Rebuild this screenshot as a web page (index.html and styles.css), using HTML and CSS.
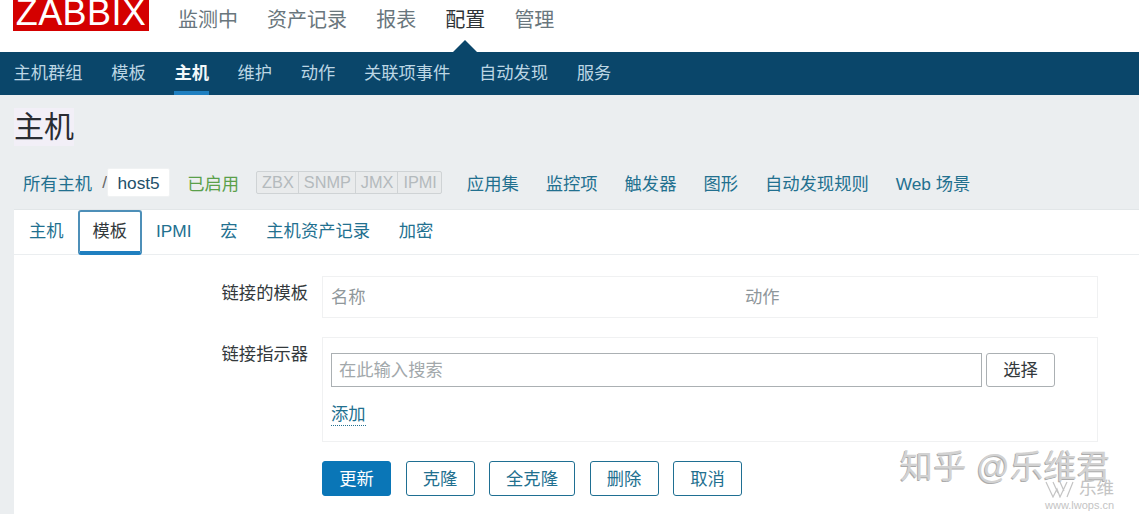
FILE: index.html
```html
<!DOCTYPE html>
<html lang="zh">
<head>
<meta charset="utf-8">
<title>主机</title>
<link rel="stylesheet" href="styles.css">
</head>
<body>
<header class="topbar">
  <div class="logo"><span class="logo-text">ZABBIX</span></div>
  <nav class="topnav">
    <a>监测中</a><a>资产记录</a><a>报表</a><a class="on">配置</a><a>管理</a>
  </nav>
</header>
<nav class="subnav">
  <a>主机群组</a><a>模板</a><a class="on">主机</a><a>维护</a><a>动作</a><a>关联项事件</a><a>自动发现</a><a>服务</a>
</nav>
<main class="page">
  <h1 class="title"><span>主机</span></h1>
  <div class="crumbs">
    <a class="link">所有主机</a><span class="sep">/</span><span class="current">host5</span>
    <span class="status">已启用</span>
    <span class="badges"><i>ZBX</i><i>SNMP</i><i>JMX</i><i>IPMI</i></span>
    <a class="link item">应用集</a><a class="link item">监控项</a><a class="link item">触发器</a><a class="link item">图形</a><a class="link item">自动发现规则</a><a class="link item">Web 场景</a>
  </div>
  <section class="panel">
    <div class="tabs">
      <a>主机</a><a class="on">模板</a><a>IPMI</a><a>宏</a><a>主机资产记录</a><a>加密</a>
    </div>
    <form class="form">
      <label class="lab">链接的模板</label>
      <div class="box head"><span class="c1">名称</span><span>动作</span></div>
      <label class="lab">链接指示器</label>
      <div class="box link-box">
        <div class="search">
          <div class="input">在此输入搜索</div>
          <button type="button" class="btn">选择</button>
        </div>
        <a class="add">添加</a>
      </div>
      <div class="actions">
        <button type="button" class="btn primary">更新</button>
        <button type="button" class="btn">克隆</button>
        <button type="button" class="btn wide">全克隆</button>
        <button type="button" class="btn">删除</button>
        <button type="button" class="btn">取消</button>
      </div>
    </form>
  </section>
</main>
<div class="wm">知乎 @乐维君</div>
<div class="wm2">
  <div class="wm2-row">
    <svg class="wm2-logo" viewBox="0 0 30 17" aria-hidden="true"><path d="M1 1l7 15 4-8 3 8 7-15M8 1l5 11M15 1l4 9M28 1l-6 15"/></svg>
    <b>乐维</b>
  </div>
  <small>www.lwops.cn</small>
</div>
</body>
</html>
```
FILE: styles.css
```css
* { box-sizing: border-box; }
html, body { margin: 0; height: 514px; overflow: hidden; background: #fff; }
body {
  position: relative;
  font-family: "Liberation Sans", "Noto Sans CJK SC", sans-serif;
  font-size: 17.3px;
  color: #3a4a52;
}
a { text-decoration: none; }

.topbar { height: 52px; display: flex; padding-left: 13px; }
.logo {
  width: 136px; height: 31px; background: #d40000; color: #fff;
  overflow: hidden; display: flex; justify-content: center; align-items: flex-end;
}
.logo-text { font-size: 36px; line-height: 36px; letter-spacing: .4px; margin-bottom: 0; }
.topnav { display: flex; gap: 29.1px; margin-left: 29px; padding-top: 7px; font-size: 20px; line-height: 26px; color: #69767d; }
.topnav a { position: relative; height: 45px; }
.topnav a.on { color: #2f3437; }
.topnav a.on::after {
  content: ""; position: absolute; left: 50%; bottom: 0; margin-left: -12px;
  border: 12px solid transparent; border-top: 0; border-bottom: 12px solid #0a466a;
}

.subnav { height: 43px; background: #0a466a; display: flex; gap: 28.6px; padding-left: 13.5px; color: #bcd6e4; line-height: 42px; }
.subnav a { height: 43px; }
.subnav a.on { color: #f2f8fb; font-weight: 700; border-bottom: 4px solid #1f7fc0; }

.page { background: #ebeef0; height: 419px; }
.title { margin: 0; padding: 13px 0 0 14px; height: 58px; font-size: 30px; line-height: 38px; font-weight: 400; color: #2a2d33; }
.title span { background: #f2eff7; display: inline-block; }

.crumbs { height: 56px; display: flex; align-items: center; padding: 2px 0 0 23px; }
.link { color: #22708f; }
.sep { margin: 0 0 0 10px; color: #666; }
.current {
  background: #fff; color: #22506a; height: 29px; line-height: 28px; padding: 0 9px 0 9.5px;
  border: 1px solid #f0f2f3; border-radius: 2px;
}
.status { color: #5aa04a; margin-left: 17.5px; }
.badges {
  display: flex; margin-left: 17px; height: 23px; border: 1px solid #cfd3d5; border-radius: 2px;
  color: #b4babd; background: #e9ebec; line-height: 21px; font-size: 16.3px;
}
.badges i { font-style: normal; padding: 0 4px 0 5px; border-left: 1px solid #cfd3d5; }
.badges i:first-child { border-left: 0; padding-left: 5px; }
.item { margin-left: 27px; }
.badges + .item { margin-left: 25px; }

.panel { margin-left: 14px; background: #fff; height: 305px; border-top: 1px solid #e2e6e8; }
.tabs { display: flex; height: 45px; padding-left: .6px; border-bottom: 1px solid #ebeef0; line-height: 42px; color: #22708f; }
.tabs a { padding: 0 14.4px; height: 45px; }
.tabs a.on {
  color: #33393c; border: 2px solid #4d8fb8; border-bottom: 4px solid #1f7fc0; border-radius: 3px;
  padding: 0 12.5px; line-height: 39px;
}

.form {
  display: grid; grid-template-columns: 294px 776px; column-gap: 14px;
  padding-top: 21px; align-items: start;
}
.lab { text-align: right; line-height: 34px; margin-top: 0; color: #33393c; }
.box { border: 1px solid #f0f1f2; }
.head { height: 42px; display: flex; padding-left: 8px; line-height: 41px; color: #8f979b; margin-bottom: 19px; }
.c1 { width: 414px; }
.link-box { height: 105px; padding: 15px 8px 0; }
.search { display: flex; gap: 4px; }
.input {
  width: 651px; height: 34px; border: 1px solid #abb0b3; padding-left: 7px;
  line-height: 33px; color: #a2a8ab;
}
.btn {
  width: 69px; height: 35px; border: 1px solid #1f6f92; border-radius: 3px; background: #fff;
  color: #22708f; font: inherit; line-height: 32px; padding: 0;
}
.search .btn { border-color: #abb0b3; color: #33393c; height: 34px; }
.add { display: inline-block; margin-top: 17px; line-height: 21px; color: #22708f; border-bottom: 1px dotted #22708f; }
.actions { grid-column: 2; display: flex; gap: 14.5px; margin-top: 19px; }
.primary { background: #0a76b7; border-color: #0a76b7; color: #fff; }
.wide { width: 86px; }

.wm {
  position: absolute; left: 900px; top: 447px; font-size: 33px; line-height: 40px;
  color: #d2d2d2; text-shadow: -1px 1px 0 #ababab; letter-spacing: .4px; white-space: nowrap;
}
.wm2 {
  position: absolute; left: 1045px; top: 480px; width: 72px; color: #c4c4c4;
  display: flex; flex-direction: column; line-height: 1;
}
.wm2-row { display: flex; align-items: center; gap: 4px; height: 18px; }
.wm2-logo { width: 30px; height: 17px; fill: none; stroke: #c4c4c4; stroke-width: 1.2; }
.wm2 b { font-weight: 400; font-size: 17.5px; }
.wm2 small { font-size: 11px; margin-top: 2px; white-space: nowrap; }
```
